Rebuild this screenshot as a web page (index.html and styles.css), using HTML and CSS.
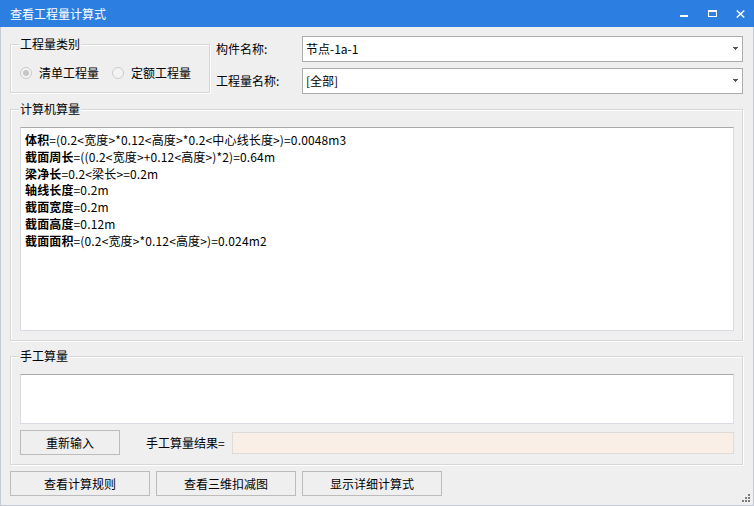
FILE: index.html
```html
<!DOCTYPE html>
<html lang="zh-CN">
<head>
<meta charset="utf-8">
<title>查看工程量计算式</title>
<link rel="stylesheet" href="styles.css">
</head>
<body>
<div class="window">
  <div class="titlebar">
    <span class="title">查看工程量计算式</span>
    <div class="controls">
      <span class="ctl"><svg width="9" height="7" viewBox="0 0 9 7"><rect x="0" y="5" width="8" height="2" fill="#fff"/></svg></span>
      <span class="ctl"><svg width="9" height="7" viewBox="0 0 9 7"><rect x="0.5" y="1" width="8" height="5.5" fill="none" stroke="#fff" stroke-width="1"/><rect x="0" y="0" width="9" height="2" fill="#fff"/></svg></span>
      <span class="ctl"><svg width="9" height="8" viewBox="0 0 9 8"><path d="M0.7 0.5 L8.3 7.5 M8.3 0.5 L0.7 7.5" stroke="#fff" stroke-width="1.4" fill="none"/></svg></span>
    </div>
  </div>
  <div class="body">
    <div class="top-row">
      <fieldset class="group group-type">
        <legend>工程量类别</legend>
        <div class="radios">
          <span class="radio">
            <svg width="12" height="12" viewBox="0 0 12 12"><circle cx="6" cy="6" r="5.5" fill="#f3f3f3" stroke="#c9c9c9"/><circle cx="6" cy="6" r="3" fill="#c6c6c6"/></svg>
            <span class="radio-label">清单工程量</span>
          </span>
          <span class="radio">
            <svg width="12" height="12" viewBox="0 0 12 12"><circle cx="6" cy="6" r="5.5" fill="#f3f3f3" stroke="#cbcbcb"/></svg>
            <span class="radio-label">定额工程量</span>
          </span>
        </div>
      </fieldset>
      <div class="fields">
        <span class="field-label">构件名称:</span>
        <div class="combo"><span class="combo-text">节点-1a-1</span><svg class="arrow" width="5" height="3" viewBox="0 0 5 3"><rect x="0" y="0" width="5" height="1" fill="#595959"/><rect x="1" y="1" width="3" height="1" fill="#595959"/><rect x="2" y="2" width="1" height="1" fill="#595959"/></svg></div>
        <span class="field-label">工程量名称:</span>
        <div class="combo"><span class="combo-text">[全部]</span><svg class="arrow" width="5" height="3" viewBox="0 0 5 3"><rect x="0" y="0" width="5" height="1" fill="#595959"/><rect x="1" y="1" width="3" height="1" fill="#595959"/><rect x="2" y="2" width="1" height="1" fill="#595959"/></svg></div>
      </div>
    </div>

    <fieldset class="group group-calc">
      <legend>计算机算量</legend>
      <div class="formula">
        <div class="line"><b>体积</b>=(0.2&lt;宽度&gt;*0.12&lt;高度&gt;*0.2&lt;中心线长度&gt;)=0.0048m3</div>
        <div class="line"><b>截面周长</b>=((0.2&lt;宽度&gt;+0.12&lt;高度&gt;)*2)=0.64m</div>
        <div class="line"><b>梁净长</b>=0.2&lt;梁长&gt;=0.2m</div>
        <div class="line"><b>轴线长度</b>=0.2m</div>
        <div class="line"><b>截面宽度</b>=0.2m</div>
        <div class="line"><b>截面高度</b>=0.12m</div>
        <div class="line"><b>截面面积</b>=(0.2&lt;宽度&gt;*0.12&lt;高度&gt;)=0.024m2</div>
      </div>
    </fieldset>

    <fieldset class="group group-manual">
      <legend>手工算量</legend>
      <div class="manual-input"></div>
      <div class="manual-row">
        <button class="btn btn-reset">重新输入</button>
        <span class="result-label">手工算量结果=</span>
        <div class="result-field"></div>
      </div>
    </fieldset>

    <div class="actions">
      <button class="btn btn-action">查看计算规则</button>
      <button class="btn btn-action">查看三维扣减图</button>
      <button class="btn btn-action">显示详细计算式</button>
    </div>
  </div>
  <svg class="grip" width="9" height="9" viewBox="0 0 9 9">
    <rect x="6" y="0" width="2" height="2" fill="#7c7c7c"/>
    <rect x="3" y="3" width="2" height="2" fill="#7c7c7c"/>
    <rect x="6" y="3" width="2" height="2" fill="#7c7c7c"/>
    <rect x="0" y="6" width="2" height="2" fill="#7c7c7c"/>
    <rect x="3" y="6" width="2" height="2" fill="#7c7c7c"/>
    <rect x="6" y="6" width="2" height="2" fill="#7c7c7c"/>
  </svg>
</div>
</body>
</html>
```
FILE: styles.css
```css
* { box-sizing: border-box; }

html, body {
  margin: 0;
  padding: 0;
  background: #efefef;
}

body {
  font-family: "Noto Sans CJK SC", "Microsoft YaHei", sans-serif;
  font-size: 12px;
  color: #000;
}

.window {
  position: relative;
  width: 754px;
  height: 506px;
  display: flex;
  flex-direction: column;
  background: #efefef;
}

.titlebar {
  height: 27px;
  flex: none;
  background: #2c7fe0;
  display: flex;
  align-items: center;
  padding-left: 10px;
}

.title {
  color: #fff;
  font-size: 12px;
  line-height: 16px;
}

.controls {
  margin-left: auto;
  display: flex;
  height: 100%;
}

.ctl {
  width: 28px;
  display: flex;
  align-items: center;
  justify-content: center;
}

.ctl svg { display: block; }

.body {
  flex: 1;
  border-left: 1px solid #c5cbd5;
  border-right: 1px solid #c5cbd5;
  border-bottom: 1px solid #c5cbd5;
  padding: 9px 10px 0 9px;
  display: flex;
  flex-direction: column;
}

.group {
  margin: 0;
  min-width: 0;
  border: 1px solid #d7d7d7;
  box-shadow: 1px 1px 0 #fff, inset 1px 1px 0 #fff;
  padding: 10px 8px 9px 9px;
}

.group legend {
  padding: 0 1px;
  margin-left: -1px;
  line-height: 16px;
  font-size: 12px;
  background: #efefef;
}

.top-row {
  display: flex;
  align-items: flex-start;
}

.group-type {
  width: 200px;
  flex: none;
  padding: 13px 8px 11px 9px;
}

.radios {
  display: flex;
  align-items: center;
  height: 16px;
}

.radio {
  display: flex;
  align-items: center;
  color: #000;
}

.radio + .radio { margin-left: 13px; }

.radio svg { display: block; flex: none; }

.radio-label {
  margin-left: 7px;
  line-height: 16px;
}

.fields {
  flex: 1;
  margin-left: 6px;
  display: grid;
  grid-template-columns: 86px 1fr;
  grid-auto-rows: 26px;
  row-gap: 6px;
  align-items: center;
}

.field-label {
  line-height: 16px;
}

.combo {
  height: 26px;
  background: #fff;
  border: 1px solid #adadad;
  display: flex;
  align-items: center;
  padding-left: 3px;
  padding-right: 4px;
}

.combo-text { line-height: 16px; }

.combo .arrow {
  margin-left: auto;
  display: block;
  position: relative;
  top: -1px;
}

.group-calc { margin-top: 7px; }

.formula {
  height: 204px;
  background: #fff;
  border: 1px solid #d9dce2;
  border-top-color: #a9a9a9;
  padding: 4px 4px 0 4px;
}

.line {
  line-height: 16.8px;
  white-space: nowrap;
  letter-spacing: 0.14px;
}

.line b { font-weight: bold; }

.group-manual { margin-top: 7px; }

.manual-input {
  height: 50px;
  background: #fff;
  border: 1px solid #d9dce2;
  border-top-color: #a9a9a9;
}

.manual-row {
  margin-top: 6px;
  height: 25px;
  display: flex;
  align-items: center;
}

.btn {
  font-family: "Noto Sans CJK SC", "Microsoft YaHei", sans-serif;
  font-size: 12px;
  color: #000;
  background: #efefef;
  border: 1px solid #bcbcbc;
  padding: 0;
  height: 25px;
  line-height: 16px;
  margin: 0;
}

.btn-reset { width: 100px; flex: none; }

.result-label {
  margin-left: 26px;
  width: 86px;
  flex: none;
  line-height: 16px;
}

.result-field {
  flex: 1;
  height: 22px;
  background: #f9efe6;
  border: 1px solid #dedbd8;
}

.actions {
  margin-top: 6px;
  display: flex;
  gap: 6px;
}

.btn-action { width: 140px; }

.grip {
  position: absolute;
  right: 3px;
  bottom: 3px;
  display: block;
}
```
